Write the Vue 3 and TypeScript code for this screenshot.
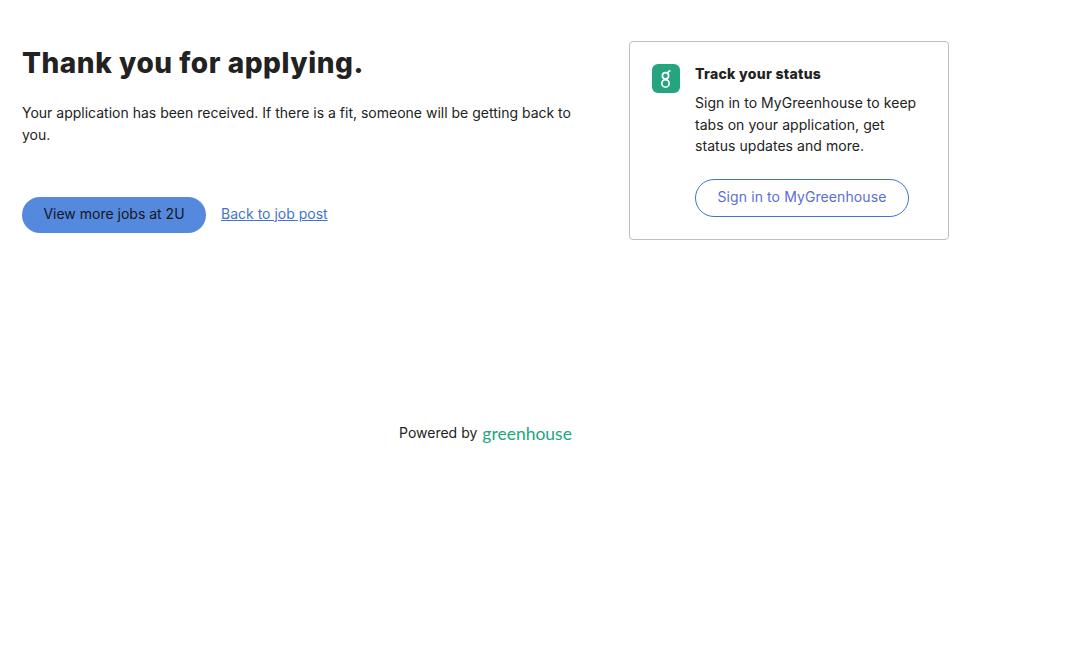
<script setup lang="ts">
const title: string = 'Thank you for applying.'
</script>

<template>
  <div class="page">
    <main class="main">
      <section class="message">
        <h1 class="title">{{ title }}</h1>
        <p class="body">Your application has been received. If there is a fit, someone will be getting back to you.</p>
        <div class="actions">
          <a class="primary" href="#">View more jobs at 2U</a>
          <a class="back" href="#">Back to job post</a>
        </div>
      </section>
      <aside class="card">
        <div class="badge">
          <svg width="28" height="29" viewBox="0 0 28 29" aria-hidden="true">
            <rect width="28" height="29" rx="6" fill="#24a47f" />
            <g fill="none" stroke="#fff" stroke-width="1.7">
              <circle cx="13.500" cy="19.400" r="3.700" />
              <circle cx="13.500" cy="11.800" r="3.100" />
              <path d="M15.600 9.600c.1-1.300.8-2.500 2.200-2.800" stroke-linecap="round" />
            </g>
          </svg>
        </div>
        <div class="card-content">
          <h2 class="card-title">Track your status</h2>
          <p class="card-text">Sign in to MyGreenhouse to keep tabs on your application, get status updates and more.</p>
          <a class="outline" href="#">Sign in to MyGreenhouse</a>
        </div>
      </aside>
    </main>
    <footer class="footer">
      <span>Powered by</span>
      <span class="brand">greenhouse</span>
    </footer>
  </div>
</template>

<style>
html, body { margin: 0; background: #fff; }
</style>

<style scoped>
.page {
  width: 927px;
  padding: 41px 0 0 22px;
  font-family: Inter, "Liberation Sans", sans-serif;
  color: #222;
}
.main {
  display: flex;
  justify-content: space-between;
  align-items: flex-start;
}
.message { width: 578px; }
.title {
  margin: 0;
  font-size: 28px;
  line-height: 44px;
  font-weight: 800;
  letter-spacing: 0.55px;
  color: #222;
}
.body {
  margin: 17px 0 0;
  font-size: 14px;
  line-height: 22px;
  color: #222;
}
.actions {
  display: flex;
  align-items: center;
  gap: 15px;
  margin-top: 51px;
}
.primary {
  box-sizing: border-box;
  width: 184px;
  height: 36px;
  border-radius: 18px;
  background: #5589de;
  color: #15171c;
  font-size: 14px;
  line-height: 34px;
  text-align: center;
  text-decoration: none;
}
.back {
  padding-bottom: 4px;
  font-size: 14px;
  color: #3f75cc;
  text-decoration: underline;
}
.card {
  box-sizing: border-box;
  width: 320px;
  height: 199px;
  display: flex;
  gap: 15px;
  padding: 22px;
  border: 1px solid #bdbdbd;
  border-radius: 4px;
}
.badge { flex: none; height: 29px; }
.badge svg { display: block; }
.card-content { flex: 1; min-width: 0; }
.card-title {
  margin: 0;
  font-size: 14px;
  line-height: 20px;
  font-weight: 800;
  letter-spacing: 0.3px;
  color: #222;
}
.card-text {
  max-width: 225px;
  margin: 8px 0 0;
  font-size: 14px;
  line-height: 21.500px;
  letter-spacing: 0.05px;
  color: #222;
}
.outline {
  display: block;
  box-sizing: border-box;
  width: 214px;
  height: 38px;
  margin-top: 22px;
  border: 1px solid #3f75cc;
  border-radius: 19px;
  color: #5a6fd0;
  font-size: 14px;
  line-height: 34px;
  letter-spacing: 0.1px;
  text-align: center;
  text-decoration: none;
}
.footer {
  display: flex;
  justify-content: center;
  align-items: center;
  gap: 5px;
  margin-top: 180px;
  font-size: 14px;
  color: #222;
}
.brand {
  padding-top: 3px;
  font-family: Lato, sans-serif;
  font-size: 17.500px;
  font-weight: 400;
  color: #24a47f;
}
</style>
